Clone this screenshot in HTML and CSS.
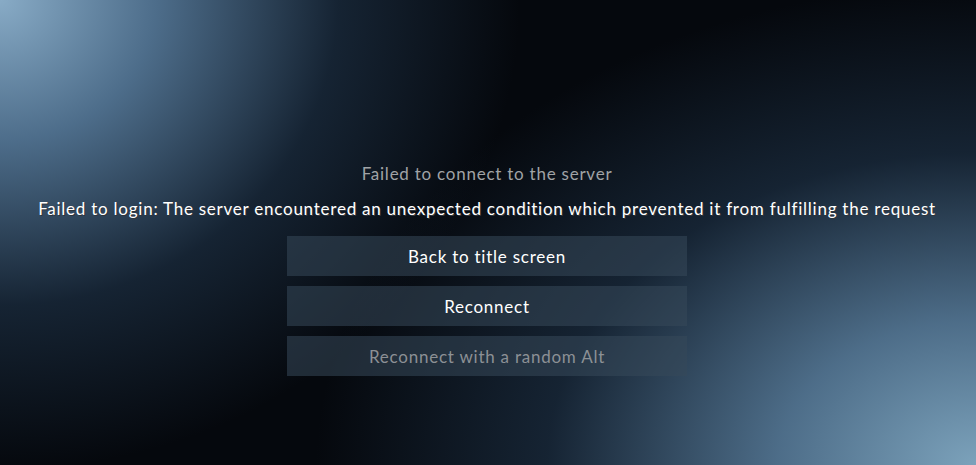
FILE: index.html
```html
<!DOCTYPE html>
<html>
<head>
  <meta charset="UTF-8" />
  <title>Disconnected</title>
  <link rel="stylesheet" href="styles.css">
</head>
<body>
  <div class="screen">
    <p class="reason">Failed to connect to the server</p>
    <p class="message">Failed to login: The server encountered an unexpected condition which prevented it from fulfilling the request</p>
    <div class="buttons">
      <button type="button" class="btn">Back to title screen</button>
      <button type="button" class="btn">Reconnect</button>
      <button type="button" class="btn disabled" disabled>Reconnect with a random Alt</button>
    </div>
  </div>
</body>
</html>
```

FILE: styles.css
```css
html, body {
  margin: 0;
  height: 100%;
}
body {
  font-family: Lato, "DejaVu Sans", sans-serif;
  letter-spacing: 0.76px;
  background-color: #05080d;
  background-image:
    radial-gradient(ellipse 520px 470px at 0px 0px, #88abc6 0%, rgba(85, 120, 152, 0.9) 30%, rgba(35, 58, 82, 0.55) 65%, rgba(5, 8, 13, 0) 100%),
    radial-gradient(ellipse 660px 480px at 976px 465px, #7ca2bb 0%, rgba(85, 120, 150, 0.9) 30%, rgba(35, 58, 82, 0.55) 65%, rgba(5, 8, 13, 0) 100%);
  overflow: hidden;
}
.screen {
  height: 465px;
  box-sizing: border-box;
  padding-top: 164px;
  padding-right: 2px;
  display: flex;
  flex-direction: column;
  align-items: center;
}
.reason {
  margin: 0 0 15px;
  line-height: 20px;
  font-size: 17px;
  color: #a0a3a6;
}
.message {
  margin: 0 0 17px;
  line-height: 20px;
  font-size: 17px;
  color: #fff;
  text-shadow: 1px 1px 0 #30353c;
  white-space: nowrap;
}
.buttons {
  display: flex;
  flex-direction: column;
  gap: 10px;
}
.btn {
  width: 400px;
  height: 40px;
  border: none;
  padding: 0;
  font-family: inherit;
  letter-spacing: inherit;
  font-size: 17px;
  color: #fff;
  background: rgba(55, 72, 90, 0.55);
}
.btn.disabled {
  color: #8c9095;
}
```
